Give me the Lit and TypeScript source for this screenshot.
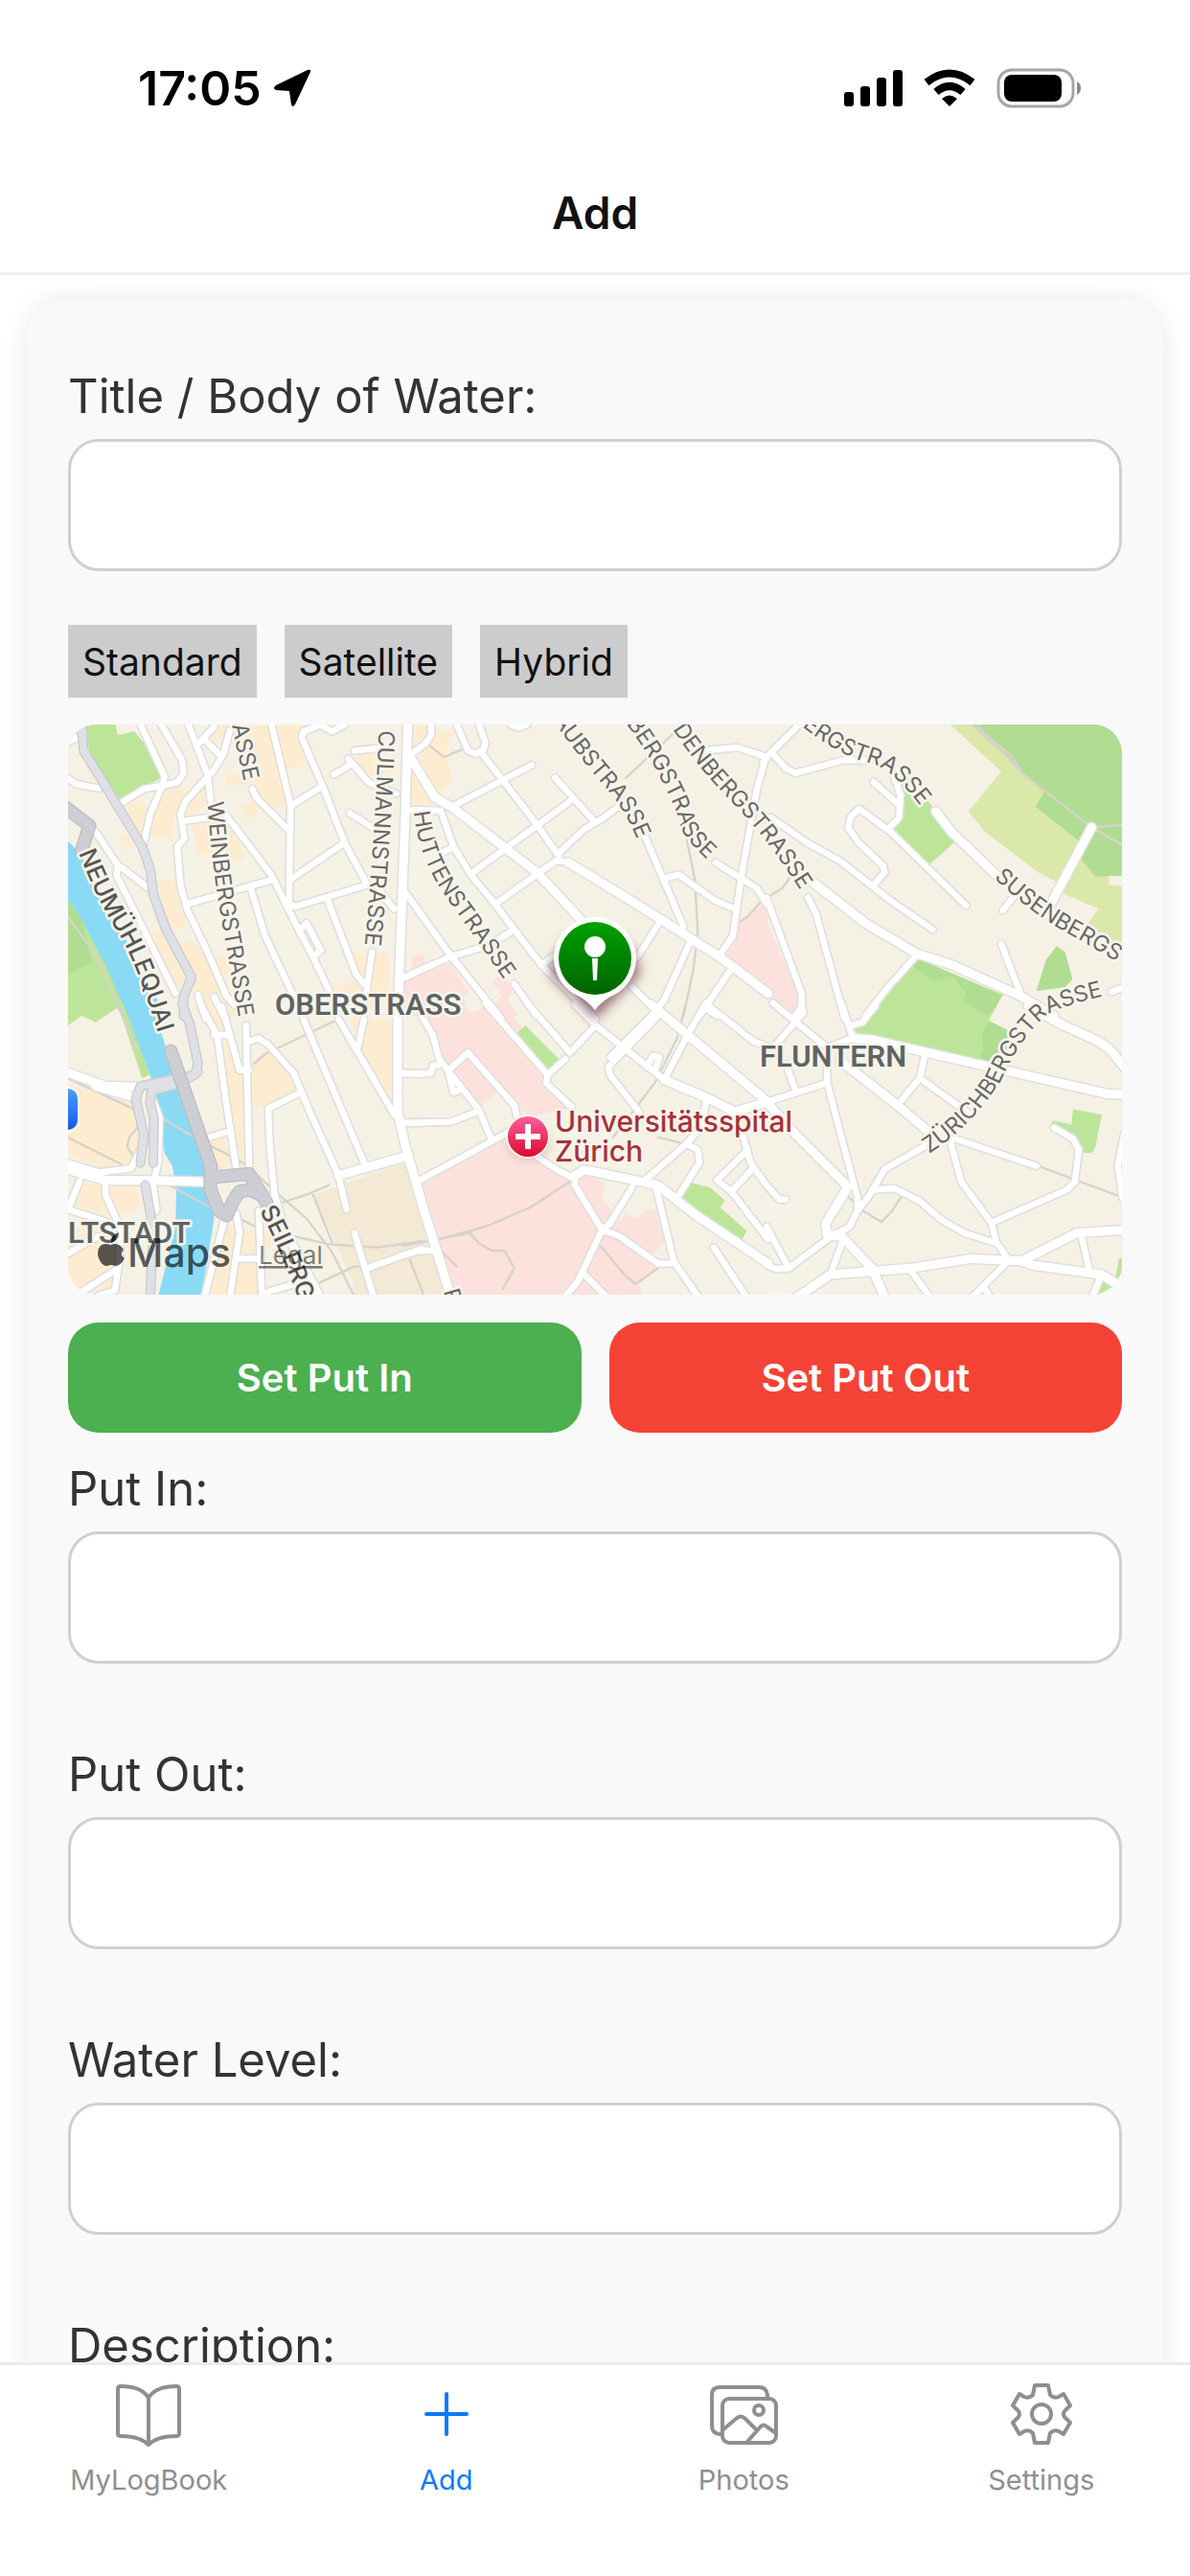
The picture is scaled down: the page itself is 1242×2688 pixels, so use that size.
import { LitElement, html, css, svg } from "lit";
import { customElement, property, state } from "lit/decorators.js";
import { classMap } from "lit/directives/class-map.js";

type Area = [fill: string, points: string];
type Street = [id: string, text: string, d: string, major?: boolean];
interface Tile {
  x: number;
  y: number;
  areas: Area[];
  paths: string[];
  roads: string[];
  wide: string[];
  grey: string[];
  dark: string[];
  streets: Street[];
}

const PARK = "#bde599";
const WOOD = "#b0dd92";
const LIME = "#dae8a9";
const SHOP = "#fdecd0";
const CAMPUS = "#f3e9d4";
const CLINIC = "#fce1dc";
const WATER = "#8adaf5";
const LAND = "#f6f1e5";
const FIELD = "#f5f3e5";

/* Map tiles: coordinates inside a tile are three times finer than the map's. */
const TILES: Tile[] = [
  {
    x: -11, y: -16,
    areas: [
      [FIELD, "480,290 530,335 670,520 725,610 740,880 680,960 560,960 400,620 375,430 400,330"],
      [FIELD, "735,300 830,240 895,420 970,550 745,618 725,610"],
      [PARK, "85,48 182,48 188,82 240,70 270,105 325,215 270,245 190,290 100,130"],
      [SHOP, "215,300 255,285 290,310 335,250 375,240 410,262 385,300 365,345 358,408 300,400 240,400"],
      [SHOP, "395,300 465,230 475,300 400,340"],
      [SHOP, "528,205 600,198 605,235 530,240"],
      [SHOP, "510,48 670,48 725,305 650,308 610,260 620,180 560,60 480,110"],
      [SHOP, "680,48 760,48 775,180 715,187"],
      [SHOP, "575,300 620,285 630,320 590,350"],
      [SHOP, "420,360 530,350 590,460 560,485 500,450 440,458"],
      [SHOP, "310,538 375,528 405,680 350,695"],
      [SHOP, "295,695 320,690 430,830 370,890"],
      [SHOP, "385,735 430,722 545,900 560,960 440,960"],
      [SHOP, "485,775 535,772 545,835 500,835"],
      [SHOP, "190,405 220,395 235,425 210,440"],
      [SHOP, "930,150 1000,140 1060,200 975,210"],
      [SHOP, "1090,150 1140,180 1140,300 1090,305"],
      [SHOP, "925,760 1040,765 1040,870 960,960 860,870 930,850"],
      [CLINIC, "1090,850 1140,820 1140,960 1090,960"],
      [PARK, "30,590 130,740 220,960 30,960"],
      [WOOD, "30,590 75,660 110,795 30,830"],
      [LAND, "185,935 205,960 150,960"],
      [WATER, "30,410 70,450 130,560 340,960 220,960 150,800 70,650 30,590"],
    ],
    paths: ["30,645 120,770 205,960"],
    roads: [
      "260,48 335,210 330,235 290,330 268,430",
      "190,300 270,250 375,230 395,200 390,160 325,48",
      "30,215 60,235 130,248", "30,105 70,85",
      "410,48 470,205 480,290",
      "540,65 520,140 490,190 400,290 385,330 398,405 375,430 385,550 405,625 470,760 530,900 560,930",
      "440,110 490,55", "460,95 510,145", "395,350 470,340",
      "530,335 670,520 760,700 800,775 850,880",
      "670,48 730,300 725,610", "610,250 625,280 725,380",
      "825,48 770,70 765,90 830,240 900,420 970,550",
      "735,300 830,240", "735,530 895,420",
      "725,610 745,618 970,550 1000,560 1055,625",
      "405,610 670,535", "605,560 650,710 740,900",
      "760,690 780,670 825,755 800,775", "845,595 935,830 960,860",
      "120,385 190,490 185,520 370,890 ", "200,495 285,560",
      "985,760 965,900", "930,130 1010,122", "865,205 915,175",
      "910,155 975,230 1060,265", "915,325 985,370", "1090,840 1140,815",
      "820,48 860,70 900,48", "490,900 520,960", "440,895 465,970",
    ],
    wide: ["1097,30 1090,300 1068,900"],
    grey: ["75,40 82,130 180,290 265,430 290,500 300,580 340,690 420,840 395,900 395,960"],
    dark: ["15,300 100,365 75,445"],
    streets: [
      ["rasse", "RASSE", "M536,6 L594,270"],
      ["wein", "WEINBERGSTRASSE", "M470,290 Q480,470 512,650 T578,1030"],
      ["culm", "CULMANNSTRASSE", "M1006,66 Q995,400 956,810"],
      ["neum", "NEUMÜHLEQUAI", "M66,450 Q120,590 190,700 T345,1120", true],
    ],
  },
  {
    x: 349, y: -16,
    areas: [
      [FIELD, "20,320 120,320 290,610 350,690 150,770 10,575"],
      [FIELD, "165,300 320,230 420,360 320,430"],
      [SHOP, "35,48 95,48 75,110 35,130"],
      [SHOP, "55,150 100,62 158,72 135,135 155,230 105,270"],
      [SHOP, "20,180 50,190 100,300 20,305"],
      [CLINIC, "5,850 150,795 190,860 250,935 270,960 5,960"],
      [CLINIC, "25,780 65,765 75,795 35,812"],
      [CLINIC, "280,850 320,825 345,880 330,910 360,960 250,960 310,900"],
      [CLINIC, "1050,670 1125,610 1145,640 1145,880 1000,780"],
      [FIELD, "190,905 215,880 250,930 215,950"],
    ],
    paths: [
      "885,380 915,530 925,700 910,820 880,960", "700,215 850,75",
      "80,110 130,150 190,125", "1050,670 1080,650 1120,605",
    ],
    roads: [
      "90,48 90,80 70,110 20,145",
      "10,315 120,318 160,430 215,520 290,610 350,690 435,800 605,970",
      "170,48 205,130 230,140 255,125 260,105 240,48",
      "250,140 320,230 420,360 490,460", "165,300 405,175",
      "478,215 600,350", "215,515 530,285",
      "690,295 630,340 570,375 490,450", "290,610 480,475 520,478 700,590",
      "120,450 155,435", "10,575 150,770 310,970",
      "5,840 150,775 270,740 350,690", "760,400 880,680 870,695",
      "820,530 865,518 980,600 1040,625", "980,480 1060,530 1110,560 1140,610",
      "940,130 1050,120 1140,150",
      "1135,160 1110,250 1060,530 1035,710 990,775",
      "800,675 740,770 690,820", "435,800 480,770", "900,730 820,910 780,960 650,1090",
      "1025,820 930,960", "950,935 985,960", "720,870 800,950",
      "350,860 420,960", "340,48 365,58 390,48",
    ],
    wide: ["25,150 100,275 160,310 420,510 560,660", "520,480 700,590 860,690 1000,780 1145,890"],
    grey: [], dark: [],
    streets: [
      ["hutt", "HUTTENSTRASSE", "M36,322 Q50,470 145,600 T370,925"],
      ["aub", "AUBSTRASSE", "M470,34 Q560,160 640,250 T755,470"],
      ["berg", "BERGSTRASSE", "M700,46 Q760,120 815,230 T870,370 Q900,430 1020,530"],
      ["den", "DENBERGSTRASSE", "M846,62 Q920,180 1040,300 T1290,640"],
    ],
  },
  {
    x: 729, y: -16,
    areas: [
      [FIELD, "0,150 60,210 240,170 330,240 250,370 340,545 120,420 0,340"],
      [WOOD, "638,40 1120,40 1120,525 1030,525 980,465 975,410 840,305 868,260 800,200"],
      [LIME, "566,40 638,40 800,200 868,260 840,305 975,410 980,465 1030,525 1120,520 1120,755 1000,680 1040,625 935,580 905,540 850,510 685,385 632,320 735,195"],
      [LAND, "1072,522 1120,522 1120,555 1072,550"],
      [PARK, "412,210 450,220 540,330 590,415 512,485 400,380 425,320"],
      [PARK, "470,780 740,895 690,970 320,970"],
      [WOOD, "470,780 740,895 690,970 615,915 625,885 580,835 520,850 460,805"],
      [WOOD, "908,742 935,760 958,845 935,870 845,882 875,785"],
      [CLINIC, "0,660 100,900 100,940 80,960 0,900"],
    ],
    paths: [
      "635,40 760,155 800,200 1018,370 1120,428", "655,40 680,75 770,150 805,205",
      "1018,370 1120,362", "0,590 50,560 75,525",
    ],
    roads: [
      "-10,165 10,140 110,40", "20,140 60,185 90,200 240,160 320,160",
      "-10,345 15,340 130,420 230,475 390,600 520,690",
      "335,228 415,300", "400,215 420,270 415,340 390,365",
      "340,545 370,510 365,490 290,420 255,370 265,335 290,312 390,385 625,615",
      "130,590 155,640 245,970", "0,590 110,890 110,930 90,960",
      "470,770 395,855", "385,865 310,960", "740,630 780,580",
      "735,735 795,890", "1080,885 1120,870",
    ],
    wide: [
      "530,320 580,385 720,520", "130,530 310,670 470,765 580,800 800,900 900,960",
      "885,620 1018,370",
    ],
    grey: [], dark: [],
    streets: [
      ["erg", "BERGSTRASSE", "M75,25 Q220,145 320,168 T545,400"],
      ["sus", "SUSENBERGS", "M712,528 Q830,640 940,700 T1240,880"],
    ],
  },
  {
    x: -11, y: 294,
    areas: [
      [FIELD, "670,320 760,275 880,520 905,640 870,740 800,590 850,905 820,905 690,620"],
      [FIELD, "980,480 1090,460 1140,600 1140,400 1080,360"],
      [PARK, "30,0 185,0 180,10 120,50 75,30 30,62"],
      [PARK, "190,0 215,0 290,215 265,225"],
      [SHOP, "30,245 235,305 265,400 235,490 150,505 30,465"],
      [SHOP, "60,555 245,555 260,630 180,660 50,625"],
      [SHOP, "30,690 180,700 180,800 70,890 30,860"],
      [SHOP, "90,890 180,830 180,880"],
      [SHOP, "440,0 510,0 575,195 600,200 600,480 560,490 540,440 525,300 500,95"],
      [SHOP, "610,180 640,145 690,135 760,270 670,310 610,320"],
      [SHOP, "475,420 520,410 545,490 500,520"],
      [SHOP, "520,680 690,720 630,800 630,910 470,910"],
      [SHOP, "915,40 1060,40 1060,330 950,140"],
      [CAMPUS, "800,590 1090,490 1140,600 1230,910 930,910 925,860 870,740"],
      [WATER, "205,-10 300,-10 355,190 470,520 490,670 450,910 315,910 370,690 372,570 360,500 335,460 310,280 290,215"],
    ],
    paths: [
      "325,350 430,410 590,495 660,560 780,665 860,770 930,910",
      "740,720 850,745 1000,755 1145,735", "700,615 780,590 850,560",
      "30,225 235,320", "30,410 200,495", "350,560 480,630",
      "615,180 650,150 870,45", "820,865 930,815 975,815", "560,660 620,690",
      "250,380 225,410 218,440 235,465", "1100,785 1145,900", "190,0 245,130",
      "800,590 860,740",
    ],
    roads: [
      "30,490 130,520 230,508 270,430", "290,270 320,350 315,490 300,560 310,640",
      "70,545 40,620", "30,635 200,690", "150,545 150,590 200,700", "30,775 130,720",
      "200,700 190,820 60,905", "190,820 180,890 130,905",
      "450,0 500,90 525,280 560,510", "490,90 535,90", "515,0 570,200 600,200",
      "590,60 600,500", "600,110 630,100 660,120 740,210 790,330 880,530 905,635",
      "770,40 960,490", "880,40 1055,340", "660,320 760,270",
      "660,320 665,440 680,590 720,720", "475,410 525,395",
      "960,40 940,130", "1075,210 1145,212", "1080,365 1145,365",
      "930,710 990,910", "970,820 1140,760", "525,660 460,910",
      "560,650 570,710 540,910", "630,640 640,910", "565,790 630,790",
      "640,900 740,870",
    ],
    wide: [
      "25,205 150,250 240,252", "120,250 240,285", "30,510 150,545 300,545 465,550",
      "880,530 1090,470", "1065,20 1065,330 1090,440 1145,630 1235,920", "660,600 820,910",
    ],
    grey: [
      "390,-10 415,60 440,180 430,215 260,250 245,290 270,400 260,490",
      "440,205 390,240 295,265 290,300 302,350 300,490", "275,560 300,700 290,915",
    ],
    dark: [
      "355,140 480,500 478,570 505,640 530,655 550,610 570,580 600,575 640,590",
      "485,535 600,525 655,615",
    ],
    streets: [
      ["seil", "SEILERG", "M632,640 Q700,760 790,1010", true],
    ],
  },
  {
    x: 349, y: 294,
    areas: [
      [FIELD, "440,250 560,110 700,150 650,210 740,330 790,540 540,520 420,470 530,320"],
      [CLINIC, "80,30 95,0 330,0 375,70 350,95 450,210 450,240 520,320 400,345 350,310 205,150 145,200 110,170"],
      [LAND, "190,-5 215,22 250,5 240,-15"],
      [CLINIC, "160,205 200,160 300,270 245,315"],
      [CLINIC, "50,550 330,400 420,480 540,550 620,700 560,840 500,910 150,910"],
      [CLINIC, "540,520 590,515 637,565 620,600 655,640 625,700"],
      [CLINIC, "650,695 700,650 735,668 760,635 795,640 820,740 785,775"],
      [CLINIC, "620,710 700,730 800,820 740,870 755,910 510,910 560,840"],
      [PARK, "385,60 490,165 455,205 350,90"],
      [PARK, "905,553 965,568 1010,608 995,630 1078,703 1060,738 920,655 872,600"],
    ],
    paths: [
      "0,750 110,730 260,690 400,630 530,545",
      "210,710 240,742 280,765 320,765 350,820 315,885", "125,770 170,815",
      "620,750 700,845 730,870 800,820", "885,0 860,100 790,240 660,410",
      "800,410 880,430", "150,722 215,708",
    ],
    roads: [
      "-5,210 90,210 95,185 110,185", "60,30 95,90 115,165 240,325 280,420",
      "145,200 205,145 350,310 360,350", "145,210 160,270 185,260",
      "-5,365 150,362 240,328", "45,550 330,395",
      "260,-10 455,215 450,240 530,315", "455,215 510,165",
      "390,-10 425,30 525,145 605,60", "540,-5 605,60 820,230",
      "800,30 645,190 650,215 740,330",
      "765,190 785,155 805,160 790,200", "820,230 890,95 950,-10",
      "960,0 1100,110 1140,125", "950,300 940,360",
      "420,470 490,515 540,540 540,560 625,700 550,860 505,915",
      "765,540 890,430 925,450 930,490 860,600", "890,430 950,360",
      "720,565 650,680 625,700 680,720 800,805 840,805",
      "795,570 850,800 930,915", "570,840 645,915", "975,755 1080,915",
      "1065,400 1090,490 1140,560", "1080,450 985,545 1030,580 1095,510",
      "1030,580 1145,730", "0,780 50,765 100,765",
    ],
    wide: [
      "780,-5 1145,300", "820,230 950,285 1040,330 1145,300",
      "540,530 570,512 800,560 920,655 1145,805",
    ],
    grey: [], dark: [],
    streets: [["ra", "R", "M128,892 L150,970"]],
  },
  {
    x: 729, y: 294,
    areas: [
      [FIELD, "0,560 230,720 160,910 0,910"],
      [PARK, "345,0 400,-20 700,-20 720,0 695,45 785,90 720,190 500,145 270,95 265,65 300,50"],
      [WOOD, "615,-15 740,-40 720,0 695,30"],
      [WOOD, "695,45 785,90 725,190 665,180 680,130 675,85"],
      [PARK, "960,322 1050,340 1030,440 1018,460 985,458 970,410 890,375 895,358 955,370"],
      [PARK, "1038,903 1055,860 1082,878"],
      [PARK, "1103,790 1120,785 1120,840 1092,855"],
      [CLINIC, "50,-5 105,-5 75,28"],
    ],
    paths: ["850,500 1120,600", "300,640 360,675 390,645 420,600", "250,590 270,610"],
    roads: [
      "110,-10 115,20 30,120", "20,-10 190,130", "235,-10 270,100",
      "265,60 300,50 340,0", "60,180 90,260", "0,300 190,240",
      "190,130 190,240 240,430 285,600 285,640 260,690 220,715",
      "190,130 270,100",
      "495,155 480,225 410,310", "480,225 640,340",
      "510,430 370,510 335,570", "590,415 845,500",
      "575,420 610,550 705,680 720,740 760,795",
      "330,575 400,570 480,610 550,670 620,710 715,740", "335,575 285,640",
      "900,380 960,415 978,450 965,550 940,575 710,675",
      "1120,400 1100,500 1115,600", "0,560 40,605 60,605",
      "0,690 70,820", "0,810 30,822 70,820 190,730 240,700",
      "240,730 200,840", "985,715 1010,825", "1045,850 1020,910",
      "755,800 640,915", "680,880 705,915", "450,825 515,915",
    ],
    wide: [
      "270,100 330,105 700,190 1070,275 1120,275", "230,170 410,310 510,395",
      "0,300 90,400 255,565 185,680 190,715 235,720 330,820 372,915",
      "820,0 930,60 1040,110 1075,135 1120,190",
      "90,915 200,840 450,820 640,790 800,797 970,710 1120,700",
      "800,797 830,810 1050,840 1090,865",
    ],
    grey: [], dark: [],
    streets: [
      ["zuer", "ZÜRICHBERGSTRASSE", "M508,462 Q640,380 735,230 Q800,90 880,25 Q960,-15 1120,-45"],
    ],
  },
];

const at = (t: Tile) => `translate(${t.x} ${t.y}) scale(0.33333)`;
const layer = (key: "paths" | "roads" | "wide" | "grey" | "dark", cls: string) =>
  TILES.map(
    (t) => svg`<g class=${cls} transform=${at(t)}>${t[key].map((p) => svg`<polyline points=${p} />`)}</g>`,
  );

@customElement("area-map")
class AreaMap extends LitElement {
  static styles = css`
    :host { display: block; }
    svg { display: block; width: 100%; height: auto; border-radius: 30px; background: #f6f1e5; }
    polyline { fill: none; stroke-linecap: round; stroke-linejoin: round; }
    .path { stroke: #d6d3ca; stroke-width: 7; }
    .case { stroke: #dfe0de; stroke-width: 29; }
    .road { stroke: #fff; stroke-width: 19; }
    .case-wide { stroke: #dfe0de; stroke-width: 36; }
    .road-wide { stroke: #fff; stroke-width: 27; }
    .case-grey { stroke: #c6c8cc; stroke-width: 31; }
    .road-grey { stroke: #dfe0e5; stroke-width: 24; }
    .case-dark { stroke: #bbbcc0; stroke-width: 43; }
    .road-dark { stroke: #cdced3; stroke-width: 36; }
    text { font-family: Inter, "Liberation Sans", sans-serif; paint-order: stroke; stroke-linejoin: round; }
    .street { font-size: 70px; font-weight: 400; fill: #686868; stroke: #f7f4ea; stroke-width: 16px; }
    .major { font-size: 76px; font-weight: 500; fill: #555; }
    .district {
      font-family: Roboto, "Liberation Sans", sans-serif; font-size: 31px; font-weight: 600;
      fill: #5e6464; stroke: #f7f4ea; stroke-width: 5px;
    }
    .poi { font-size: 30px; font-weight: 500; fill: #a5323b; stroke: #f7f4ea; stroke-width: 5px; }
    .brand { font-size: 41px; font-weight: 500; fill: #000; fill-opacity: 0.65; }
    .logo { fill: #000; fill-opacity: 0.65; }
    .legal { font-size: 26px; fill: #000; fill-opacity: 0.5; text-decoration: underline; }
  `;

  render() {
    return html`
      <svg viewBox="0 0 1100 595" role="img" aria-label="Map">
        <defs>
          <linearGradient id="pin" x1="0" y1="0" x2="0" y2="1">
            <stop offset="0" stop-color="#00a000" /><stop offset="1" stop-color="#006400" />
          </linearGradient>
          <linearGradient id="clinic" x1="0" y1="0" x2="0" y2="1">
            <stop offset="0" stop-color="#ff5f9e" /><stop offset="1" stop-color="#d90a2c" />
          </linearGradient>
          <linearGradient id="rail" x1="0" y1="0" x2="0" y2="1">
            <stop offset="0" stop-color="#4aa0ff" /><stop offset="1" stop-color="#1557e6" />
          </linearGradient>
          <filter id="soft" x="-50%" y="-50%" width="200%" height="200%">
            <feGaussianBlur stdDeviation="6" />
          </filter>
        </defs>
        ${TILES.map((t) => svg`<g transform=${at(t)}>${t.areas.map(([f, p]) => svg`<polygon fill=${f} points=${p} />`)}</g>`)}
        ${layer("paths", "path")}
        ${layer("roads", "case")}${layer("wide", "case-wide")}
        ${layer("roads", "road")}${layer("wide", "road-wide")}
        ${layer("grey", "case-grey")}${layer("grey", "road-grey")}
        ${layer("dark", "case-dark")}${layer("dark", "road-dark")}
        ${TILES.map(
          (t) => svg`<g transform=${at(t)}>${t.streets.map(
            ([id, text, d, major]) => svg`
              <path id=${id} d=${d} fill="none" />
              <text class=${major ? "street major" : "street"}><textPath href="#${id}">${text}</textPath></text>`,
          )}</g>`,
        )}
        <rect x="-40" y="378" width="52" height="48" rx="12" fill="#fff" opacity="0.7" />
        <rect x="-40" y="380" width="50" height="43" rx="10" fill="url(#rail)" />
        <text class="district" x="216" y="303">OBERSTRASS</text>
        <text class="district" x="722" y="357">FLUNTERN</text>
        <text class="district" x="0" y="541">LTSTADT</text>
        <g>
          <ellipse cx="481" cy="438" rx="20" ry="14" fill="#7a4a4a" opacity="0.35" filter="url(#soft)" />
          <circle cx="480" cy="430" r="23" fill="#f7f4ea" />
          <circle cx="480" cy="430" r="21" fill="url(#clinic)" />
          <path d="M480,420 V440 M470,430 H490" stroke="#fff" stroke-width="6" stroke-linecap="square" />
          <text class="poi" x="508" y="425">Universitätsspital</text>
          <text class="poi" x="508" y="456">Zürich</text>
        </g>
        <g>
          <path d="M550,308 L503,262 A46,46 0 0 1 597,262 Z" fill="#5c2c38" opacity="0.6" filter="url(#soft)" />
          <circle cx="550" cy="244" r="43" fill="#fff" />
          <path d="M524,278 Q543,288 550,298 Q557,288 576,278 Z" fill="#fff" />
          <circle cx="550" cy="244" r="38" fill="url(#pin)" />
          <circle cx="550" cy="232" r="11" fill="#fff" />
          <path d="M547,244 H553 L552,267 H548 Z" fill="#fff" />
        </g>
        <path class="logo" d="M45,541 Q44,533 53,530 Q53,538 45,541 Z M58,548 Q54,541 48,542 L44,543 Q39,541 35,543 Q29,548 32,557 Q36,566 41,565 Q45,563 49,565 Q55,565 59,557 Q53,553 58,548 Z" />
        <text class="brand" x="62" y="566">Maps</text>
        <a href="#legal"><text class="legal" x="199" y="563">Legal</text></a>
      </svg>
    `;
  }
}

const book = svg`<path d="M36,20 C31,12 20,8 7,8 Q4,8 4,11 V57 Q4,60 7,60 C22,60 30,63 36,69 C42,63 50,60 65,60 Q68,60 68,57 V11 Q68,8 65,8 C52,8 41,12 36,20 Z M36,20 V69" />`;
const plus = svg`<path d="M36,16 V58 M15,37 H57" />`;
const photos = svg`
  <rect x="14" y="21" width="56" height="46" rx="7" />
  <path d="M13,58 H11 Q3,57 3,49 V17 Q3,9 11,9 H52 Q60,9 61,17 V20" />
  <circle cx="52" cy="33" r="5" />
  <path d="M14,54 L28,42 Q33,37 38,42 L48,52 M39,67 L54,50 Q57,47 60,50 L70,57" />`;
const gear = svg`
  <circle cx="36" cy="37" r="10" />
  <path d="M29,7 H43 L45,17 Q49,21 54,19 L59,16 L66,28 L60,34 Q58,37 60,40 L66,46 L59,58 L54,55 Q49,53 45,57 L43,67 H29 L27,57 Q23,53 18,55 L13,58 L6,46 L12,40 Q14,37 12,34 L6,28 L13,16 L18,19 Q23,21 27,17 Z" />`;

const TABS = [
  { label: "MyLogBook", icon: book },
  { label: "Add", icon: plus },
  { label: "Photos", icon: photos },
  { label: "Settings", icon: gear },
];

@customElement("form-field")
class FormField extends LitElement {
  @property() label = "";
  @property({ type: Boolean }) multiline = false;

  static styles = css`
    :host { display: flex; flex-direction: column; gap: 16px; }
    label { font-size: 49px; line-height: 56px; color: #333; }
    input, textarea {
      box-sizing: border-box; width: 100%; height: 138px; margin: 0; padding: 0 32px;
      border: 3px solid #d0d0d0; border-radius: 32px; background: #fff;
      font: inherit; font-size: 49px; color: #333;
    }
    textarea { height: 300px; resize: none; }
  `;

  render() {
    return html`
      <label for="field">${this.label}</label>
      ${this.multiline ? html`<textarea id="field"></textarea>` : html`<input id="field" type="text" />`}
    `;
  }
}

@customElement("app-root")
class AppRoot extends LitElement {
  @state() private tab = "Add";

  static styles = css`
    :host {
      display: flex; flex-direction: column; height: 100vh; overflow: hidden; background: #fff;
      font-family: Inter, "Liberation Sans", sans-serif; color: #111;
    }
    .status {
      display: flex; justify-content: space-between; align-items: center;
      height: 184px; flex: none; box-sizing: border-box; padding: 0 112px 0 144px; color: #000;
    }
    .clock { display: flex; align-items: center; gap: 12px; font-size: 50px; font-weight: 600; }
    .signals { display: flex; align-items: center; gap: 22px; }
    svg { display: block; }
    header { flex: none; height: 100px; border-bottom: 3px solid #f0f0f0; text-align: center; }
    h1 { margin: 0; padding-top: 10px; font-size: 46px; line-height: 56px; font-weight: 600; }
    main { flex: 1; min-height: 0; overflow: hidden auto; scrollbar-width: none; padding: 25px 28px; }
    .card {
      display: flex; flex-direction: column; padding: 74px 43px; border-radius: 42px;
      background: #f9f9f9; box-shadow: 0 0 28px rgba(0, 0, 0, 0.09);
    }
    .types { display: flex; gap: 29px; margin: 56px 0 28px; }
    .types button {
      height: 76px; padding: 0 15px; border: 0; background: #ccc; color: #111;
      font: inherit; font-size: 39px;
    }
    .actions { display: grid; grid-template-columns: 1fr 1fr; gap: 29px; margin: 29px 0 31px; }
    .actions button {
      height: 115px; border: 0; border-radius: 32px; color: #fff;
      font: inherit; font-size: 40px; font-weight: 600;
    }
    .in { background: #4caf50; }
    .out { background: #f44336; }
    .fields { display: flex; flex-direction: column; gap: 88px; }
    nav {
      flex: none; display: grid; grid-template-columns: repeat(4, 1fr);
      height: 223px; box-sizing: border-box; border-top: 3px solid #ebebeb; background: #fff;
    }
    nav button {
      display: flex; flex-direction: column; align-items: center; gap: 14px; padding: 14px 0 0;
      border: 0; background: none; color: #8f8f8f; font: inherit; font-size: 29px; line-height: 36px;
    }
    nav svg { fill: none; stroke: currentColor; stroke-width: 4; stroke-linejoin: round; stroke-linecap: round; }
    nav .active { color: #0a7aff; }
  `;

  render() {
    return html`
      <div class="status">
        <div class="clock">
          <span>17:05</span>
          <svg width="40" height="40" viewBox="0 0 40 40" fill="currentColor">
            <path d="M39,3 Q40,0 36,1 L3,17 Q-1,20 3,22 L17,23 L19,37 Q20,41 23,37 Z" />
          </svg>
        </div>
        <div class="signals">
          <svg width="62" height="40" viewBox="0 0 62 40" fill="currentColor">
            <rect x="1" y="24" width="10" height="15" rx="3" /><rect x="18" y="18" width="10" height="21" rx="3" />
            <rect x="35" y="9" width="10" height="30" rx="3" /><rect x="52" y="1" width="10" height="38" rx="3" />
          </svg>
          <svg width="54" height="40" viewBox="0 0 54 40" fill="none" stroke="currentColor">
            <path d="M3,14 Q27,-5 51,14" stroke-width="8" /><path d="M13,24 Q27,12 41,24" stroke-width="8" />
            <path d="M27,39 L19,31 Q27,24 35,31 Z" fill="currentColor" stroke="none" />
          </svg>
          <svg width="90" height="42" viewBox="0 0 90 42">
            <rect x="2" y="2" width="78" height="38" rx="14" fill="none" stroke="#a6a6a6" stroke-width="3" />
            <rect x="8" y="7" width="60" height="28" rx="8" fill="#000" />
            <path d="M84,14 Q88,16 88,21 Q88,26 84,28 Z" fill="#8a8a8a" />
          </svg>
        </div>
      </div>
      <header><h1>Add</h1></header>
      <main>
        <div class="card">
          <form-field label="Title / Body of Water:"></form-field>
          <div class="types">
            ${["Standard", "Satellite", "Hybrid"].map((t) => html`<button type="button">${t}</button>`)}
          </div>
          <area-map></area-map>
          <div class="actions">
            <button type="button" class="in">Set Put In</button>
            <button type="button" class="out">Set Put Out</button>
          </div>
          <div class="fields">
            <form-field label="Put In:"></form-field>
            <form-field label="Put Out:"></form-field>
            <form-field label="Water Level:"></form-field>
            <form-field label="Description:" multiline></form-field>
          </div>
        </div>
      </main>
      <nav>
        ${TABS.map(
          (t) => html`
            <button
              type="button"
              class=${classMap({ active: t.label === this.tab })}
              @click=${() => (this.tab = t.label)}
            >
              <svg width="72" height="74" viewBox="0 0 72 74">${t.icon}</svg>
              <span>${t.label}</span>
            </button>
          `,
        )}
      </nav>
    `;
  }
}
